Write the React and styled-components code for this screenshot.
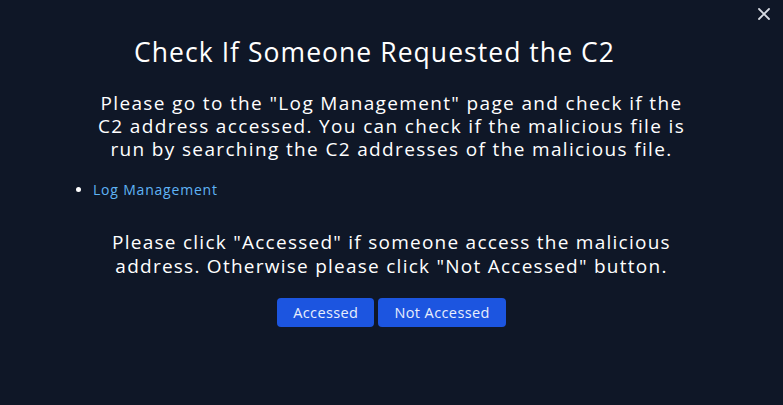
import React from 'react';
import styled, { createGlobalStyle } from 'styled-components';

const GlobalStyle = createGlobalStyle`
  html, body {
    margin: 0;
    padding: 0;
    background: #0f1727;
  }
  body {
    font-family: 'Open Sans', 'Noto Sans', sans-serif;
    color: #ffffff;
  }
`;

const Modal = styled.div`
  position: relative;
  width: 783px;
  height: 405px;
  box-sizing: border-box;
  background: #0f1727;
  padding: 34px 53px 0 53px;
  display: flex;
  flex-direction: column;
  align-items: center;
`;

const CloseButton = styled.button`
  position: absolute;
  top: 5px;
  right: 10px;
  width: 18px;
  height: 18px;
  padding: 0;
  border: none;
  background: transparent;
  cursor: pointer;
  display: flex;
  align-items: center;
  justify-content: center;
`;

const Title = styled.h2`
  margin: 0;
  padding-right: 34px;
  font-size: 26.5px;
  font-weight: 500;
  line-height: 36px;
  letter-spacing: 1.05px;
  text-align: center;
`;

const Paragraph = styled.p`
  margin: ${p => p.$top || 0}px 0 0 0;
  font-size: 19px;
  line-height: ${p => p.$lh || 23}px;
  letter-spacing: ${p => p.$ls || 1.35}px;
  text-align: center;
`;

const LinkList = styled.ul`
  align-self: stretch;
  margin: 20px 0 0 0;
  padding-left: 40px;
  font-size: 14px;
  line-height: 18px;
  color: #ffffff;
`;

const LinkItem = styled.li`
  a {
    color: #5fb3f5;
    text-decoration: none;
    letter-spacing: 0.8px;
  }
`;

const ButtonRow = styled.div`
  display: flex;
  gap: 4px;
  margin-top: 20px;
`;

const ActionButton = styled.button`
  height: 29px;
  padding: 0 16px;
  border: none;
  border-radius: 4px;
  background: #1c55e0;
  color: #e8eefc;
  font-family: 'Open Sans', 'Noto Sans', sans-serif;
  font-size: 14.5px;
  letter-spacing: 0.4px;
  cursor: pointer;
`;

export default function App() {
  return (
    <>
      <GlobalStyle />
      <Modal>
        <CloseButton aria-label="Close">
          <svg width="14" height="14" viewBox="0 0 14 14">
            <path d="M2 2 L12 12 M12 2 L2 12" stroke="#d6dae2" strokeWidth="1.8" strokeLinecap="round" />
          </svg>
        </CloseButton>
        <Title>Check If Someone Requested the C2</Title>
        <Paragraph $top={22}>
          Please go to the "Log Management" page and check if the
          <br />
          C2 address accessed. You can check if the malicious file is
          <br />
          run by searching the C2 addresses of the malicious file.
        </Paragraph>
        <LinkList>
          <LinkItem>
            <a href="#log-management">Log Management</a>
          </LinkItem>
        </LinkList>
        <Paragraph $top={31} $lh={24} $ls={1.25}>
          Please click "Accessed" if someone access the malicious
          <br />
          address. Otherwise please click "Not Accessed" button.
        </Paragraph>
        <ButtonRow>
          <ActionButton>Accessed</ActionButton>
          <ActionButton>Not Accessed</ActionButton>
        </ButtonRow>
      </Modal>
    </>
  );
}
